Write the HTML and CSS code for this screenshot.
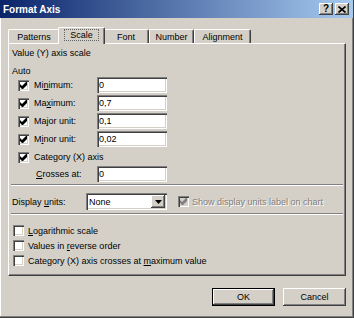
FILE: index.html
```html
<!DOCTYPE html>
<html lang="en">
<head>
  <meta charset="UTF-8">
  <title>Format Axis</title>
  <link rel="stylesheet" href="styles.css">
</head>
<body>

  <div class="window">
    <div class="titlebar">
      <span class="title">Format Axis</span>
      <div class="tbtns">
        <span class="tbtn">?</span>
        <span class="tbtn"><svg width="8" height="7" viewBox="0 0 8 7"><path d="M0.5 0.5 7.5 6.5M7.5 0.5 0.5 6.5" stroke="#000" stroke-width="1.6"/></svg></span>
      </div>
    </div>

    <div class="content">
      <div class="tabs">
        <div class="tab w-pat">Patterns</div>
        <div class="tab active"><span class="focus">Scale</span></div>
        <div class="tab w-font">Font</div>
        <div class="tab w-num">Number</div>
        <div class="tab w-align">Alignment</div>
      </div>

      <div class="panel">
        <div class="heading">Value (Y) axis scale</div>
        <div class="auto">Auto</div>

        <div class="row">
          <span class="cb"><svg class="tick" viewBox="0 0 7 7"><polygon points="0,2 2,4 6,0 7,0 7,3 3,7 2,7 0,5"/></svg></span>
          <label class="lbl">Mi<u>n</u>imum:</label>
          <input class="field" type="text" value="0">
        </div>
        <div class="row">
          <span class="cb"><svg class="tick" viewBox="0 0 7 7"><polygon points="0,2 2,4 6,0 7,0 7,3 3,7 2,7 0,5"/></svg></span>
          <label class="lbl">Ma<u>x</u>imum:</label>
          <input class="field" type="text" value="0,7">
        </div>
        <div class="row">
          <span class="cb"><svg class="tick" viewBox="0 0 7 7"><polygon points="0,2 2,4 6,0 7,0 7,3 3,7 2,7 0,5"/></svg></span>
          <label class="lbl">Ma<u>j</u>or unit:</label>
          <input class="field" type="text" value="0,1">
        </div>
        <div class="row">
          <span class="cb"><svg class="tick" viewBox="0 0 7 7"><polygon points="0,2 2,4 6,0 7,0 7,3 3,7 2,7 0,5"/></svg></span>
          <label class="lbl">M<u>i</u>nor unit:</label>
          <input class="field" type="text" value="0,02">
        </div>
        <div class="row">
          <span class="cb"><svg class="tick" viewBox="0 0 7 7"><polygon points="0,2 2,4 6,0 7,0 7,3 3,7 2,7 0,5"/></svg></span>
          <label class="lbl wide">Category (X) axis</label>
        </div>
        <div class="row sub">
          <label class="lbl short"><u>C</u>rosses at:</label>
          <input class="field" type="text" value="0">
        </div>

        <div class="sep"></div>

        <div class="units">
          <label class="units-lbl">Display <u>u</u>nits:</label>
          <div class="select">
            <span>None</span>
            <span class="drop"><svg width="7" height="4" viewBox="0 0 7 4"><polygon points="0,0 7,0 3.5,4"/></svg></span>
          </div>
          <span class="cb off"><svg class="tick" viewBox="0 0 7 7"><polygon points="0,2 2,4 6,0 7,0 7,3 3,7 2,7 0,5"/></svg></span>
          <span class="dim">Show display units label on chart</span>
        </div>

        <div class="sep sep2"></div>

        <div class="opt first"><span class="cb"></span><span><u>L</u>ogarithmic scale</span></div>
        <div class="opt"><span class="cb"></span><span>Values in <u>r</u>everse order</span></div>
        <div class="opt"><span class="cb"></span><span>Category (X) axis crosses at <u>m</u>aximum value</span></div>
      </div>

      <div class="buttons">
        <button class="btn default">OK</button>
        <button class="btn">Cancel</button>
      </div>
    </div>
  </div>

</body>
</html>
```

FILE: styles.css
```css
*{box-sizing:border-box;margin:0;padding:0}
body{
  background:#d4d0c8;
  font-family:"Liberation Sans",Arial,sans-serif;
  font-size:9px;
  color:#000;
}
/* window frame */
.window{
  width:354px;
  height:318px;
  background:#d4d0c8;
  border-right:1px solid #404040;
  border-bottom:1px solid #404040;
  box-shadow:inset -1px -1px #808080,inset 1px 0 #fff;
}
.titlebar{
  height:18px;
  display:flex;
  align-items:center;
  justify-content:space-between;
  padding:0 4px 0 3px;
  background:linear-gradient(to right,#0a246a,#a6caf0);
}
.title{color:#fff;font-weight:bold;font-size:10px}
.tbtns{display:flex;gap:2px}
.tbtn{
  width:14px;height:12px;
  background:#d4d0c8;
  box-shadow:inset -1px -1px #404040,inset 1px 1px #fff,inset -2px -2px #808080;
  display:flex;align-items:center;justify-content:center;
  font-weight:bold;font-size:10px;line-height:1;
}
.content{padding:9px 7px 0 8px}
/* tabs */
.tabs{display:flex;align-items:flex-end;height:16px}
.tab{
  height:14px;
  display:flex;align-items:center;justify-content:center;
  border-top:1px solid #fff;
  border-left:1px solid #fff;
  border-right:1px solid #404040;
  box-shadow:inset -1px 0 #808080;
  border-radius:2px 2px 0 0;
  background:#d4d0c8;
}
.w-pat{width:52px}
.w-font{width:46px}
.w-num{width:45px}
.w-align{width:57px}
.tab.active{
  width:47px;height:17px;
  margin:0 -2px -1px;
  position:relative;z-index:2;
  padding-bottom:2px;
}
.focus{border:1px dotted #666;padding:0 5px;height:12px;line-height:10px}
/* tab page */
.panel{
  height:233px;
  border:1px solid #404040;
  border-top-color:#fff;
  border-left-color:#fff;
  box-shadow:inset -1px -1px #808080;
  padding:3px 3px 0;
}
.heading{height:12px;line-height:12px}
.auto{height:10px;line-height:10px;margin-top:7px}
.row{height:18px;display:flex;align-items:center;padding-left:6px}
.row.sub{height:16px;padding-left:24px}
.cb{
  flex:none;
  width:11px;height:11px;
  background:#fff;
  box-shadow:inset 1px 1px #808080,inset 2px 2px #404040,inset -1px -1px #fff,inset -2px -2px #d4d0c8;
  display:flex;align-items:center;justify-content:center;
}
.tick{width:7px;height:7px;fill:#000}
.cb.off{background:#d4d0c8}
.cb.off .tick{fill:#808080}
.lbl{width:63px;margin-left:5px}
.lbl.wide{width:auto}
.lbl.short{width:61px;margin-left:0}
u{text-decoration:underline;text-underline-offset:1px}
.field{
  width:70px;height:16px;
  border:0;outline:0;
  background:#fff;
  box-shadow:inset 1px 1px #808080,inset 2px 2px #404040,inset -1px -1px #fff,inset -2px -2px #d4d0c8;
  padding:0 2px;
  font:inherit;color:#000;
}
.sep{height:2px;border-top:1px solid #808080;border-bottom:1px solid #fff;margin:2px -1px 0}
.sep2{margin-top:3px}
/* display units */
.units{height:17px;margin-top:7px;display:flex;align-items:center}
.units-lbl{width:74px}
.select{
  width:81px;height:17px;
  background:#fff;
  box-shadow:inset 1px 1px #808080,inset 2px 2px #404040,inset -1px -1px #fff,inset -2px -2px #d4d0c8;
  display:flex;align-items:center;justify-content:space-between;
  padding:2px 2px 2px 3px;
}
.drop{
  width:14px;height:13px;
  background:#d4d0c8;
  box-shadow:inset -1px -1px #404040,inset 1px 1px #fff,inset -2px -2px #808080;
  display:flex;align-items:center;justify-content:center;
}
.units .cb{margin-left:11px}
.dim{margin-left:3px;color:#808080;text-shadow:1px 1px #fff}
/* bottom options */
.opt{height:15px;display:flex;align-items:center;gap:4px;padding-left:1px}
.opt.first{margin-top:8px}
/* dialog buttons */
.buttons{display:flex;justify-content:flex-end;gap:8px;margin-top:12px}
.btn{
  width:63px;height:18px;
  border:0;
  background:#d4d0c8;
  box-shadow:inset -1px -1px #404040,inset 1px 1px #fff,inset -2px -2px #808080;
  font:inherit;color:#000;
}
.btn.default{border:1px solid #000}
```
